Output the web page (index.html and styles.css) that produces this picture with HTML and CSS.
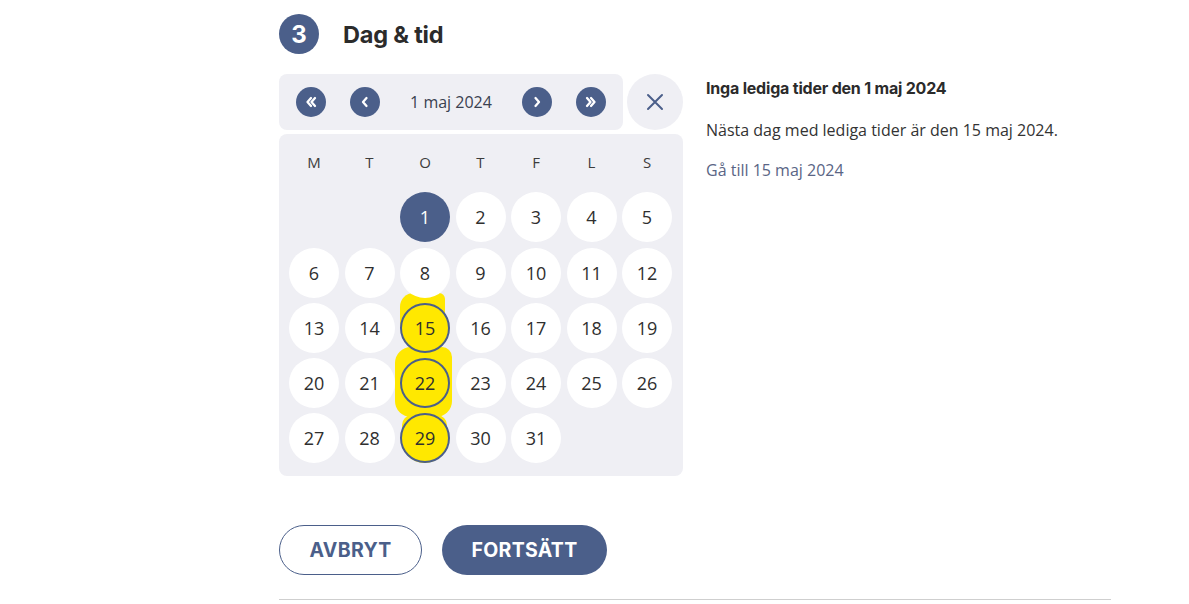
FILE: index.html
```html
<!DOCTYPE html>
<html lang="sv">
<head>
<meta charset="utf-8">
<title>Dag &amp; tid</title>
<link rel="stylesheet" href="styles.css">
</head>
<body>
<main class="page">
  <header class="step-head">
    <span class="step-num">3</span>
    <h2 class="step-title">Dag &amp; tid</h2>
  </header>

  <section class="content">
    <div class="cal-col">
      <div class="nav-row">
        <div class="nav-bar">
          <button class="nav-btn" aria-label="Föregående år">
            <svg width="14" height="14" viewBox="0 0 14 14"><path d="M7 3 3.5 7 7 11M11 3 7.5 7 11 11" fill="none" stroke="#fff" stroke-width="2.3" stroke-linecap="round" stroke-linejoin="round"/></svg>
          </button>
          <button class="nav-btn" aria-label="Föregående månad">
            <svg width="14" height="14" viewBox="0 0 14 14"><path d="M8.5 3 5 7l3.5 4" fill="none" stroke="#fff" stroke-width="2.3" stroke-linecap="round" stroke-linejoin="round"/></svg>
          </button>
          <span class="nav-date">1 maj 2024</span>
          <button class="nav-btn" aria-label="Nästa månad">
            <svg width="14" height="14" viewBox="0 0 14 14"><path d="M5.5 3 9 7l-3.5 4" fill="none" stroke="#fff" stroke-width="2.3" stroke-linecap="round" stroke-linejoin="round"/></svg>
          </button>
          <button class="nav-btn" aria-label="Nästa år">
            <svg width="14" height="14" viewBox="0 0 14 14"><path d="M3 3 6.5 7 3 11M7 3 10.5 7 7 11" fill="none" stroke="#fff" stroke-width="2.3" stroke-linecap="round" stroke-linejoin="round"/></svg>
          </button>
        </div>
        <button class="close-btn" aria-label="Stäng">
          <svg width="18" height="18" viewBox="0 0 18 18"><path d="M2 2l14 14M16 2 2 16" fill="none" stroke="#4b5f8a" stroke-width="2" stroke-linecap="round"/></svg>
        </button>
      </div>

      <div class="cal-panel">
        <span class="hl hl-15"></span>
        <span class="hl hl-22"></span>
        <span class="hl hl-29"></span>
        <div class="cal-grid">
          <span class="wd">M</span><span class="wd">T</span><span class="wd">O</span><span class="wd">T</span><span class="wd">F</span><span class="wd">L</span><span class="wd">S</span>
          <span class="day empty"></span><span class="day empty"></span>
          <span class="day selected">1</span><span class="day">2</span><span class="day">3</span><span class="day">4</span><span class="day">5</span>
          <span class="day">6</span><span class="day">7</span><span class="day">8</span><span class="day">9</span><span class="day">10</span><span class="day">11</span><span class="day">12</span>
          <span class="day">13</span><span class="day">14</span><span class="day avail">15</span><span class="day">16</span><span class="day">17</span><span class="day">18</span><span class="day">19</span>
          <span class="day">20</span><span class="day">21</span><span class="day avail">22</span><span class="day">23</span><span class="day">24</span><span class="day">25</span><span class="day">26</span>
          <span class="day">27</span><span class="day">28</span><span class="day avail">29</span><span class="day">30</span><span class="day">31</span>
        </div>
      </div>
    </div>

    <div class="info">
      <h3 class="info-title">Inga lediga tider den 1 maj 2024</h3>
      <p class="info-text">Nästa dag med lediga tider är den 15 maj 2024.</p>
      <a class="info-link" href="#">Gå till 15 maj 2024</a>
    </div>
  </section>

  <div class="actions">
    <button class="btn btn-outline">AVBRYT</button>
    <button class="btn btn-primary">FORTSÄTT</button>
  </div>
  <hr class="divider">
</main>
</body>
</html>
```

FILE: styles.css
```css
* { box-sizing: border-box; }

html, body {
  margin: 0;
  padding: 0;
  background: #fff;
}

body {
  font-family: "Open Sans", "Liberation Sans", sans-serif;
  color: #333;
}

.page {
  width: 832px;
  margin-left: 279px;
  padding-top: 14px;
}

.step-head {
  display: flex;
  align-items: center;
  gap: 24px;
  height: 40px;
}

.step-num {
  width: 40px;
  height: 40px;
  border-radius: 50%;
  background: #4b5f8a;
  color: #fff;
  font-family: Inter, "Liberation Sans", sans-serif;
  font-weight: 700;
  font-size: 24px;
  display: flex;
  align-items: center;
  justify-content: center;
}

.step-title {
  margin: 0;
  font-family: Inter, "Liberation Sans", sans-serif;
  font-weight: 700;
  font-size: 23.5px;
  color: #2b2b2b;
  letter-spacing: -0.2px;
}

.content {
  display: flex;
  gap: 23px;
  margin-top: 20px;
}

.cal-col {
  width: 404px;
  display: flex;
  flex-direction: column;
  gap: 4px;
}

.nav-row {
  display: flex;
  gap: 4px;
}

.nav-bar {
  width: 344px;
  height: 56px;
  background: #efeff4;
  border-radius: 8px;
  display: flex;
  align-items: center;
  padding: 0 17px;
  gap: 24px;
}

.nav-btn {
  width: 30px;
  height: 30px;
  border-radius: 50%;
  border: 0;
  padding: 0;
  background: #4b5f8a;
  display: flex;
  align-items: center;
  justify-content: center;
  flex: none;
}

.nav-date {
  flex: 1;
  text-align: center;
  font-size: 16px;
  color: #3a4150;
  margin: 0 -24px;
}

.close-btn {
  width: 56px;
  height: 56px;
  border-radius: 50%;
  border: 0;
  padding: 0;
  background: #efeff4;
  display: flex;
  align-items: center;
  justify-content: center;
}

.cal-panel {
  position: relative;
  background: #efeff4;
  border-radius: 8px;
  padding: 3px 10px 13px 10px;
}

.cal-grid {
  position: relative;
  display: grid;
  grid-template-columns: repeat(7, 50px);
  grid-auto-rows: 50px;
  column-gap: 5.5px;
  row-gap: 5.3px;
}

.wd {
  display: flex;
  align-items: center;
  justify-content: center;
  font-size: 15px;
  color: #3c3c3c;
}

.day {
  border-radius: 50%;
  background: #fff;
  display: flex;
  align-items: center;
  justify-content: center;
  font-size: 18px;
  color: #2f2f2f;
}

.day.empty { background: transparent; }

.day.selected {
  background: #4b5f8a;
  color: #fff;
}

.day.avail {
  background: #ffe800;
  border: 2px solid #4b5f8a;
}

.hl {
  position: absolute;
  background: #ffe800;
  pointer-events: none;
}

.hl-15 {
  left: 121px;
  top: 159px;
  width: 45px;
  height: 52px;
  border-radius: 14px 6px 22px 24px;
}

.hl-22 {
  left: 116px;
  top: 213px;
  width: 57px;
  height: 70px;
  border-radius: 16px 10px 16px 16px;
}

.hl-29 {
  left: 123px;
  top: 281px;
  width: 45px;
  height: 48px;
  border-radius: 10px 10px 22px 22px;
}

.info {
  padding-top: 4px;
}

.info-title {
  margin: 0;
  font-family: Inter, "Liberation Sans", sans-serif;
  font-weight: 700;
  font-size: 16px;
  line-height: 20px;
  color: #2b2b2b;
  letter-spacing: -0.2px;
}

.info-text {
  margin: 22px 0 0 0;
  font-size: 16px;
  line-height: 20px;
  color: #333;
}

.info-link {
  display: block;
  margin-top: 20px;
  font-size: 16px;
  line-height: 20px;
  color: #5a6585;
  text-decoration: none;
}

.actions {
  display: flex;
  gap: 20px;
  margin-top: 49px;
}

.btn {
  height: 50px;
  border-radius: 25px;
  font-family: Inter, "Liberation Sans", sans-serif;
  font-weight: 700;
  font-size: 19.5px;
  letter-spacing: 0.3px;
  display: flex;
  align-items: center;
  justify-content: center;
  padding: 0;
}

.btn-outline {
  width: 143px;
  background: #fff;
  border: 1px solid #4b5f8a;
  color: #4b5f8a;
}

.btn-primary {
  width: 165px;
  background: #4b5f8a;
  border: 0;
  color: #fff;
}

.divider {
  margin: 24px 0 0 0;
  border: 0;
  border-top: 1px solid #cfcfcf;
}
```
